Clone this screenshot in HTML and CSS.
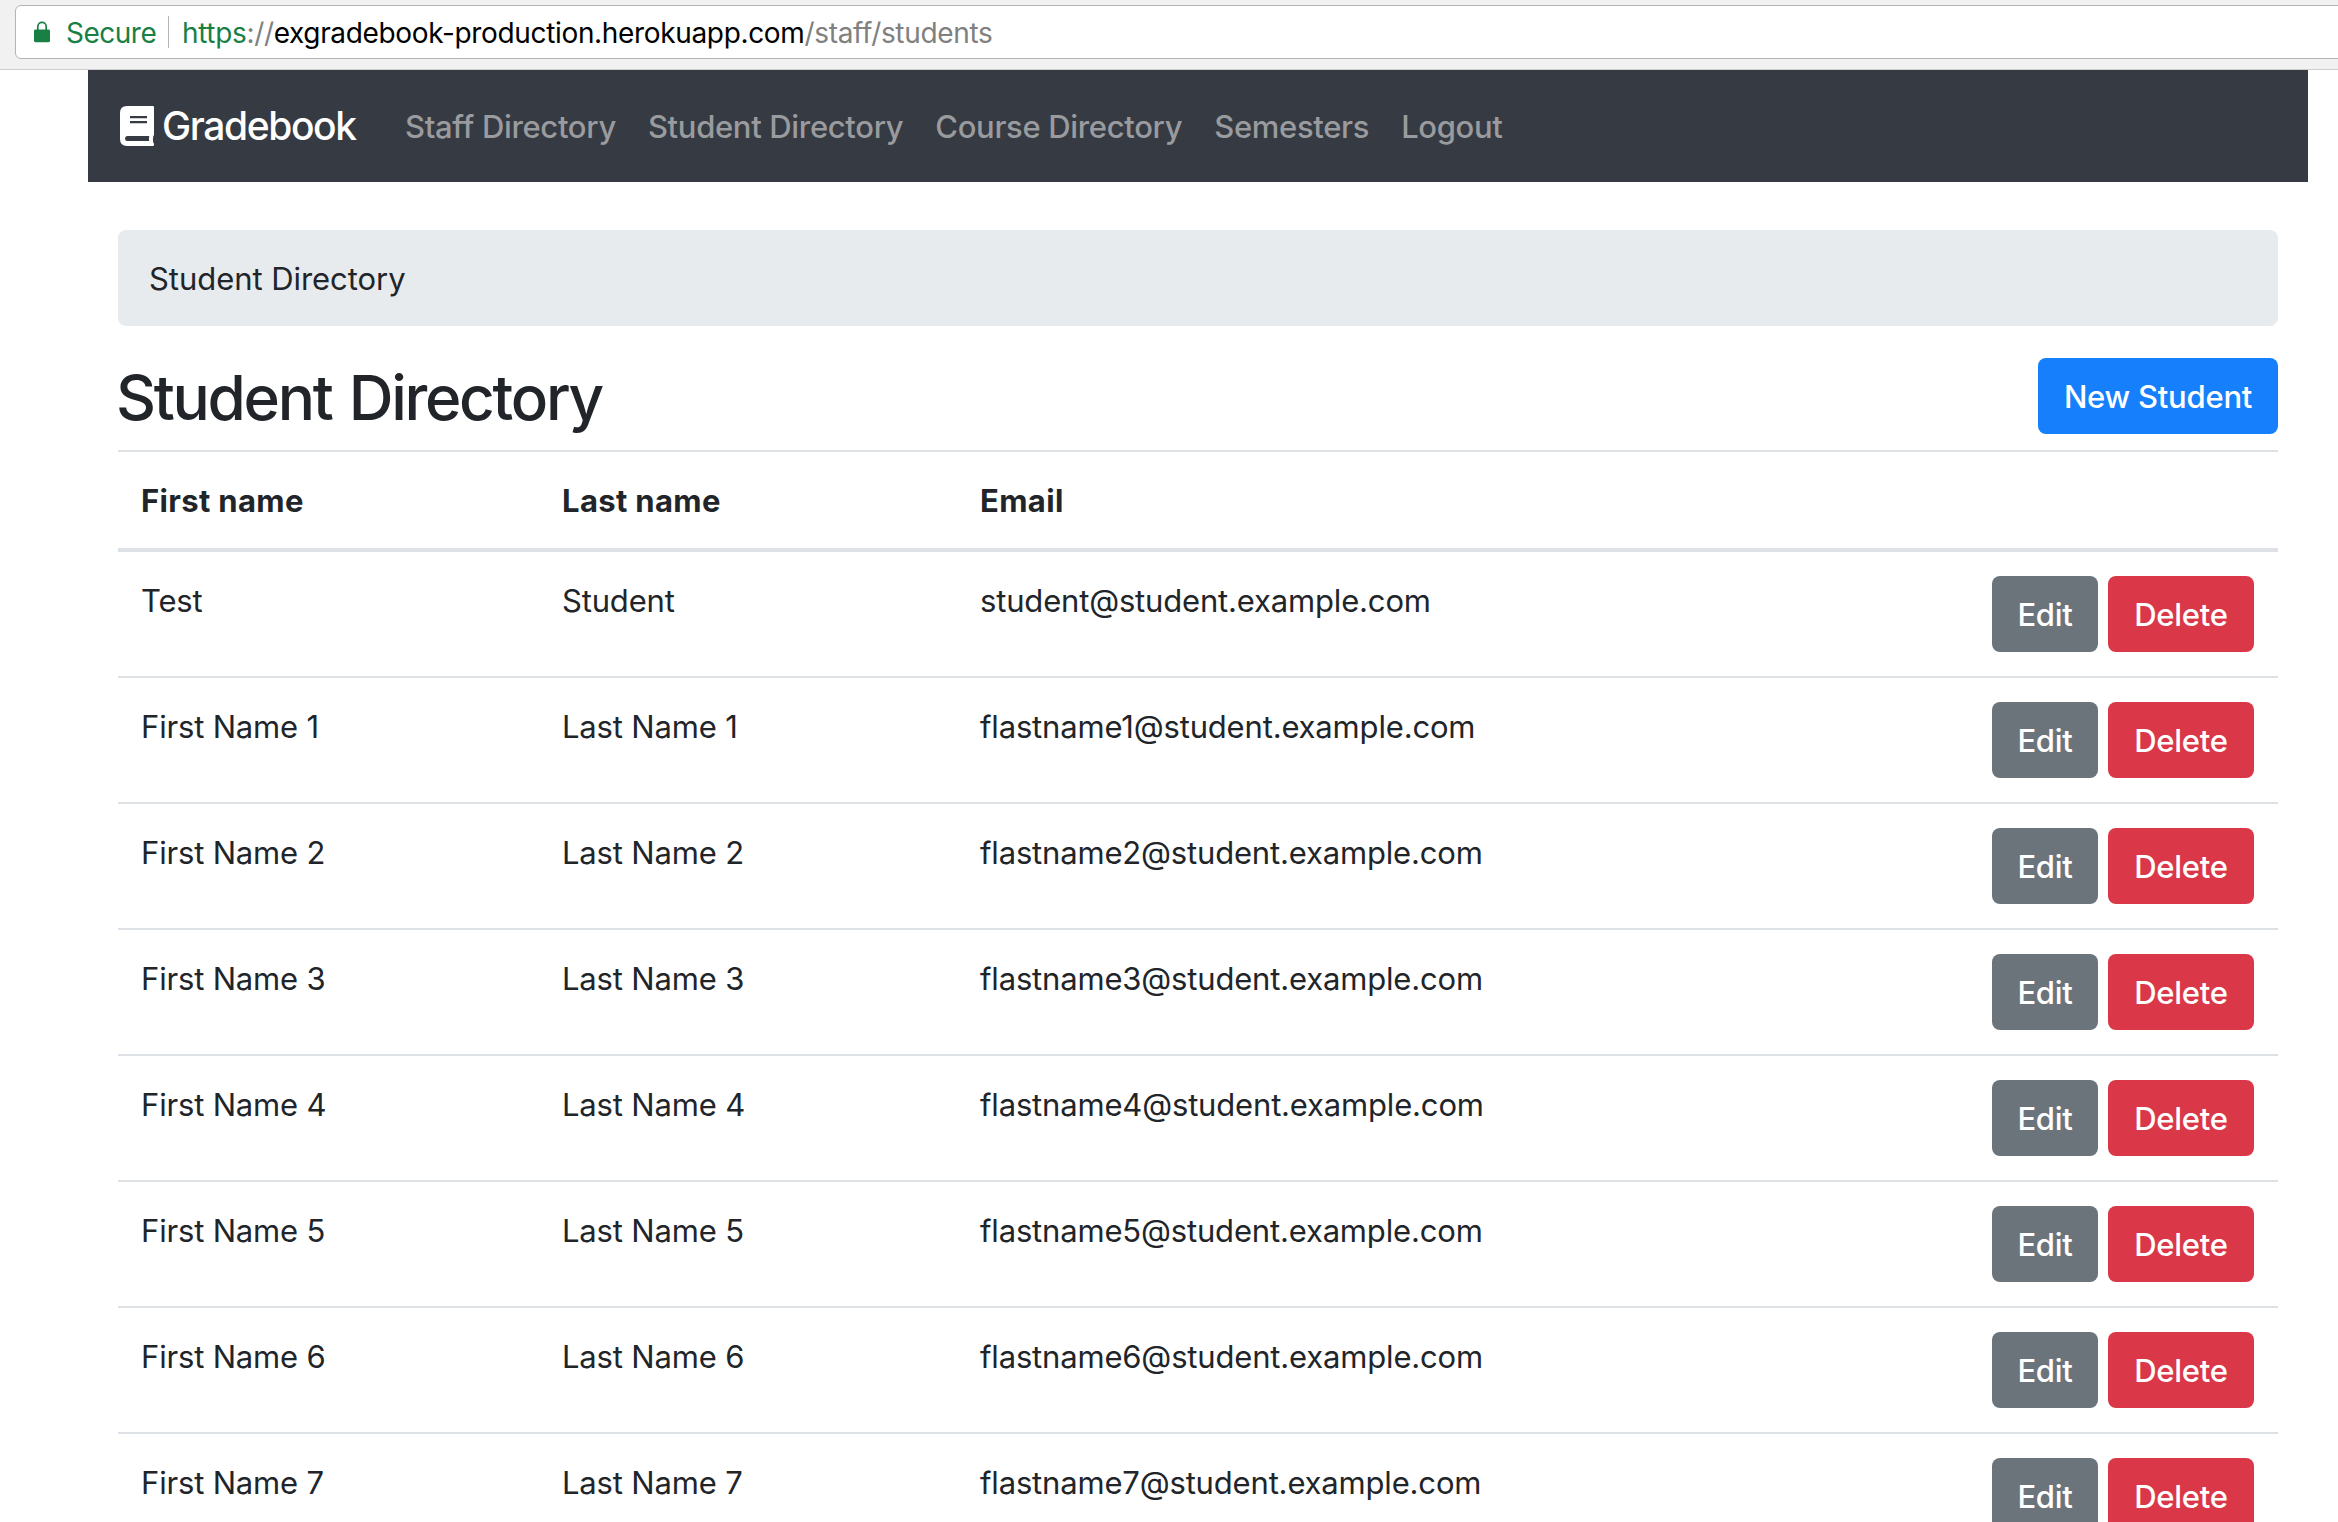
FILE: index.html
```html
<!DOCTYPE html>
<html lang="en">
<head>
<meta charset="utf-8">
<title>Gradebook</title>
<link rel="stylesheet" href="styles.css">
</head>
<body>
<div class="toolbar">
  <div class="omnibox">
    <svg class="lock" viewBox="0 0 16 22" width="16" height="22"><path d="M3.8 10V5.6a4.2 4.2 0 0 1 8.4 0V10" fill="none" stroke="#188045" stroke-width="1.7"/><rect y="8.6" width="16" height="12.6" rx="1.4" fill="#188045"/></svg>
    <span class="secure">Secure</span>
    <span class="divider"></span>
    <span class="url"><span class="scheme">https</span>://<span class="host">exgradebook-production.herokuapp.com</span>/staff/students</span>
  </div>
</div>
<div class="container">
  <nav class="navbar">
    <a class="brand"><svg class="book" viewBox="0 0 34 40" width="34" height="40"><path fill="#fff" fill-rule="evenodd" d="M7 0H33Q34 0 34 1V28.500Q34 29.500 33.200 30.300Q32.600 33 33.200 36.400Q34 37 34 38V39Q34 40 33 40H7Q0 40 0 33V7Q0 0 7 0ZM10 10V12.300H27V10ZM10 15V17.300H27V15ZM7.200 30Q5 30 5 32.500Q5 35 7.200 35H29.200Q28.700 32.500 29.200 30Z"/></svg><span class="brand-name">Gradebook</span></a>
    <a class="link">Staff Directory</a>
    <a class="link">Student Directory</a>
    <a class="link">Course Directory</a>
    <a class="link">Semesters</a>
    <a class="link">Logout</a>
  </nav>
  <main>
    <div class="breadcrumb">Student Directory</div>
    <header class="heading"><h1>Student Directory</h1><a class="btn primary">New Student</a></header>
    <table>
      <colgroup><col class="first"><col class="last"><col><col class="actions-col"></colgroup>
      <thead><tr><th>First name</th><th>Last name</th><th>Email</th><th></th></tr></thead>
      <tbody>
        <tr><td>Test</td><td>Student</td><td>student@student.example.com</td><td><div class="actions"><a class="btn edit">Edit</a><a class="btn delete">Delete</a></div></td></tr>
        <tr><td>First Name 1</td><td>Last Name 1</td><td>flastname1@student.example.com</td><td><div class="actions"><a class="btn edit">Edit</a><a class="btn delete">Delete</a></div></td></tr>
        <tr><td>First Name 2</td><td>Last Name 2</td><td>flastname2@student.example.com</td><td><div class="actions"><a class="btn edit">Edit</a><a class="btn delete">Delete</a></div></td></tr>
        <tr><td>First Name 3</td><td>Last Name 3</td><td>flastname3@student.example.com</td><td><div class="actions"><a class="btn edit">Edit</a><a class="btn delete">Delete</a></div></td></tr>
        <tr><td>First Name 4</td><td>Last Name 4</td><td>flastname4@student.example.com</td><td><div class="actions"><a class="btn edit">Edit</a><a class="btn delete">Delete</a></div></td></tr>
        <tr><td>First Name 5</td><td>Last Name 5</td><td>flastname5@student.example.com</td><td><div class="actions"><a class="btn edit">Edit</a><a class="btn delete">Delete</a></div></td></tr>
        <tr><td>First Name 6</td><td>Last Name 6</td><td>flastname6@student.example.com</td><td><div class="actions"><a class="btn edit">Edit</a><a class="btn delete">Delete</a></div></td></tr>
        <tr><td>First Name 7</td><td>Last Name 7</td><td>flastname7@student.example.com</td><td><div class="actions"><a class="btn edit">Edit</a><a class="btn delete">Delete</a></div></td></tr>
      </tbody>
    </table>
  </main>
</div>
</body>
</html>
```
FILE: styles.css
```css
* { box-sizing: border-box; }
html, body { height: 1522px; overflow: hidden; }
body {
  margin: 0;
  background: #fff;
  color: #212529;
  font: 400 31px/48px Inter, "Liberation Sans", sans-serif;
  letter-spacing: -0.17px;
}
.toolbar {
  height: 70px;
  padding: 5px 0 0 15px;
  background: #f1f1f1;
  border-bottom: 1px solid #cecece;
  overflow: hidden;
}
.omnibox {
  display: flex;
  align-items: center;
  width: 2340px;
  height: 54px;
  padding-left: 18px;
  border: 1px solid #b5b5b5;
  border-radius: 6px;
  background: #fff;
  font-size: 28px;
  letter-spacing: -0.34px;
  white-space: nowrap;
}
.lock { margin-right: 16px; }
.secure { width: 102px; padding-top: 2px; color: #188045; letter-spacing: -0.5px; }
.divider { width: 1px; height: 32px; margin-right: 13px; background: #b5b5b5; }
.url { padding-top: 2px; color: #808080; }
.scheme { color: #188045; }
.host { color: #000; }
.container { width: 2220px; margin-left: 88px; }
.navbar {
  display: flex;
  align-items: center;
  gap: 32px;
  height: 112px;
  padding-left: 32px;
  background: #363a42;
  letter-spacing: -0.33px;
  white-space: nowrap;
}
.brand {
  display: flex;
  align-items: center;
  width: 253px;
  color: #fff;
  font-size: 39px;
  font-weight: 450;
  letter-spacing: -1.4px;
}
.book { margin-right: 8px; }
.link { padding-top: 2px; color: #999b9e; font-weight: 450; }
main { padding: 48px 30px 0; }
.breadcrumb {
  height: 96px;
  padding: 25px 31px 23px;
  border-radius: 8px;
  background: #e8ebee;
  letter-spacing: -0.05px;
}
.heading {
  display: flex;
  justify-content: space-between;
  height: 92px;
  margin-top: 32px;
}
h1 {
  margin: 0 0 0 -2px;
  font-size: 62px;
  font-weight: 500;
  letter-spacing: -2.3px;
  word-spacing: 3px;
  line-height: 80px;
}
.btn {
  display: block;
  height: 76px;
  border-radius: 8px;
  color: #fff;
  font-weight: 450;
  line-height: 78px;
  letter-spacing: -0.25px;
  text-align: center;
}
.primary { width: 240px; background: #167ffc; }
.edit { width: 106px; background: #6c747b; }
.delete { width: 146px; background: #da3849; }
table { width: 100%; table-layout: fixed; border-spacing: 0; }
.first { width: 421px; }
.last { width: 418px; }
.actions-col { width: 310px; }
th, td { padding: 25px 24px 23px 23px; text-align: left; vertical-align: top; white-space: nowrap; }
th {
  height: 102px;
  border-top: 2px solid #dee2e6;
  border-bottom: 4px solid #dee2e6;
  font-weight: 700;
  letter-spacing: 0.35px;
}
td { height: 126px; border-bottom: 2px solid #dee2e6; }
td:last-child { padding: 24px; }
.actions { display: flex; gap: 10px; }
```
